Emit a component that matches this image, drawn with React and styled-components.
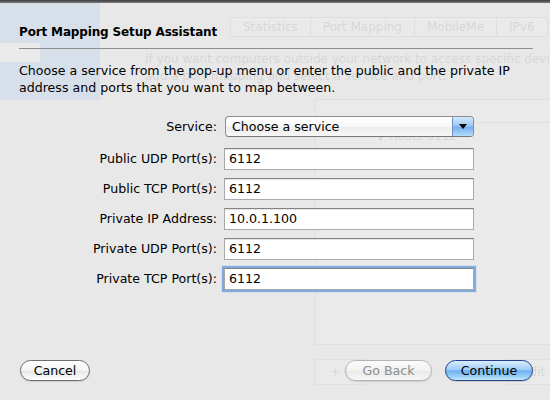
import styled, { createGlobalStyle } from "styled-components";

const GlobalStyle = createGlobalStyle`
  html, body {
    margin: 0;
    padding: 0;
  }
  body {
    width: 550px;
    height: 400px;
    overflow: hidden;
    background: #e8e8e8;
    font-family: "DejaVu Sans", "Liberation Sans", sans-serif;
  }
`;

const Stage = styled.div`
  position: relative;
  width: 550px;
  height: 400px;
  overflow: hidden;
`;

/* window behind the sheet */
const Window = styled.div`
  display: flex;
  width: 550px;
  height: 400px;
  background: #e8e8e8;
`;

const Sidebar = styled.div`
  width: 100px;
  flex-shrink: 0;
`;

const SourceList = styled.div`
  height: 97px;
  margin-top: 3px;
  padding-top: 40px;
  box-sizing: border-box;
  background: #3c98fc;
`;

const SourceItem = styled.div`
  width: 40px;
  height: 19px;
  background: #ffffff;
`;

const Main = styled.div`
  flex: 1;
  display: flex;
  flex-direction: column;
  overflow: hidden;
  padding-top: 17px;
`;

const Tabs = styled.div`
  display: flex;
  margin-left: 130px;
  height: 18px;
  border: 1px solid #8a8a8a;
  border-radius: 3px;
  background: #ffffff;
  width: max-content;
`;

const Tab = styled.div`
  padding: 0 12px;
  font-size: 12px;
  line-height: 18px;
  color: #333;
  border-left: ${(p) => (p.$first ? "none" : "1px solid #8a8a8a")};
`;

const GhostText = styled.p`
  margin: 14px 0 0 45px;
  font-size: 12px;
  line-height: 17px;
  color: #333;
  white-space: nowrap;
`;

const GhostTable = styled.div`
  margin: 14px -20px 0 215px;
  height: 222px;
  border: 1px solid #8a8a8a;
  background: #ffffff;
  padding-top: 22px;
  font-size: 12px;
  color: #333;
`;

const GhostRow = styled.div`
  border-top: 1px solid #8a8a8a;
  padding: 6px 0 0 60px;
`;

const GhostBar = styled.div`
  display: flex;
  justify-content: space-between;
  margin: 14px -10px 0 215px;
`;

const GhostButton = styled.div`
  height: 24px;
  padding: 0 14px;
  border: 1px solid #8a8a8a;
  background: #ffffff;
  font-size: 12px;
  line-height: 24px;
  color: #333;
`;

/* sheet */
const Sheet = styled.div`
  position: absolute;
  inset: 0;
  display: flex;
  flex-direction: column;
  background: rgba(232, 232, 232, 0.9);
  color: #000;
`;

const TopEdge = styled.div`
  height: 3px;
  background: linear-gradient(#3c3c3c, #7d7d7d);
`;

const Title = styled.h1`
  margin: 21px 17px 0 19px;
  padding-bottom: 8px;
  border-bottom: 1px solid #8e8e8e;
  font-size: 12px;
  line-height: 16px;
  font-weight: bold;
  letter-spacing: -0.15px;
`;

const Intro = styled.p`
  margin: 13px 17px 0 19px;
  font-size: 12.6px;
  line-height: 17px;
`;

const Form = styled.div`
  display: grid;
  grid-template-columns: 198px 250px;
  column-gap: 7px;
  row-gap: 8px;
  align-items: center;
  margin: 20px 0 0 19px;
`;

const Label = styled.label`
  text-align: right;
  font-size: 12.6px;
  line-height: 16px;
  margin-bottom: ${(p) => (p.$gap ? "3px" : "0")};
`;

const Popup = styled.div`
  display: flex;
  height: 21px;
  box-sizing: border-box;
  margin-left: 1px;
  margin-bottom: 3px;
  border: 1px solid #8d8d8d;
  border-bottom-color: #777;
  border-radius: 4px;
  overflow: hidden;
  background: linear-gradient(#ffffff 0%, #f7f7f7 50%, #ececec 52%, #f7f7f7 100%);
`;

const PopupText = styled.span`
  flex: 1;
  padding-left: 6px;
  font-size: 12.6px;
  line-height: 19px;
`;

const PopupArrow = styled.span`
  width: 20px;
  display: flex;
  align-items: center;
  justify-content: center;
  border-left: 1px solid #6d93c6;
  background: linear-gradient(#d2e7fc 0%, #9cc6f3 48%, #74adec 52%, #b2dcfc 100%);
`;

const Field = styled.div`
  height: 22px;
  box-sizing: border-box;
  padding-left: 4px;
  border: 1px solid #a9a9a9;
  border-top-color: #848484;
  background: #ffffff;
  box-shadow: ${(p) =>
    p.$focused
      ? "0 0 0 1px #7fa8dc, 0 0 1px 2px rgba(98, 150, 222, 0.75)"
      : "inset 0 1px 0 #e4e4e4"};
  font-size: 12.6px;
  line-height: 20px;
`;

const Footer = styled.div`
  display: flex;
  align-items: center;
  margin-top: auto;
  padding: 0 17px 19px 20px;
`;

const Spacer = styled.div`
  flex: 1;
`;

const Button = styled.button`
  height: 21px;
  min-width: ${(p) => p.$width};
  margin-left: ${(p) => (p.$gap ? "13px" : "0")};
  padding: 0 12px;
  border-radius: 11px;
  font-family: inherit;
  font-size: 12.6px;
  line-height: 19px;
  color: ${(p) => (p.$kind === "disabled" ? "#8d8d8d" : "#000")};
  border: 1px solid
    ${(p) =>
      p.$kind === "primary" ? "#233f8f" : p.$kind === "disabled" ? "#b4b4b4" : "#6e6e6e"};
  background: ${(p) =>
    p.$kind === "primary"
      ? "linear-gradient(#d9eefe 0%, #9fcdf7 45%, #6fb0ef 52%, #9fd3fb 85%, #c9ecfe 100%)"
      : p.$kind === "disabled"
      ? "linear-gradient(#fbfbfb 0%, #f2f2f2 50%, #e9e9e9 52%, #f7f7f7 100%)"
      : "linear-gradient(#ffffff 0%, #f4f4f4 50%, #e6e6e6 52%, #ffffff 100%)"};
  box-shadow: 0 1px 1px rgba(0, 0, 0, 0.12);
`;

const rows = [
  { label: "Public UDP Port(s):", value: "6112" },
  { label: "Public TCP Port(s):", value: "6112" },
  { label: "Private IP Address:", value: "10.0.1.100" },
  { label: "Private UDP Port(s):", value: "6112" },
  { label: "Private TCP Port(s):", value: "6112", focused: true },
];

const App = () => {
  return (
    <Stage>
      <GlobalStyle />
      <Window>
        <Sidebar>
          <SourceList>
            <SourceItem />
          </SourceList>
        </Sidebar>
        <Main>
          <Tabs>
            <Tab $first>Statistics</Tab>
            <Tab>Port Mapping</Tab>
            <Tab>MobileMe</Tab>
            <Tab>IPv6</Tab>
          </Tabs>
          <GhostText>
            If you want computers outside your network to access specific devices,
            <br />
            add a port mapping and select a service and port.
          </GhostText>
          <GhostTable>
            <GhostRow>▼ Hosts 6112</GhostRow>
          </GhostTable>
          <GhostBar>
            <GhostButton>+ –</GhostButton>
            <GhostButton>Edit</GhostButton>
          </GhostBar>
        </Main>
      </Window>

      <Sheet>
        <TopEdge />
        <Title>Port Mapping Setup Assistant</Title>
        <Intro>
          Choose a service from the pop-up menu or enter the public and the private IP
          address and ports that you want to map between.
        </Intro>
        <Form>
          <Label $gap>Service:</Label>
          <Popup>
            <PopupText>Choose a service</PopupText>
            <PopupArrow>
              <svg width="8" height="5" viewBox="0 0 8 5">
                <path d="M0 0 H8 L4 5 Z" fill="#000" />
              </svg>
            </PopupArrow>
          </Popup>
          {rows.map((r) => (
            <>
              <Label key={r.label + "l"}>{r.label}</Label>
              <Field key={r.label + "f"} $focused={r.focused}>
                {r.value}
              </Field>
            </>
          ))}
        </Form>
        <Footer>
          <Button $width="70px">Cancel</Button>
          <Spacer />
          <Button $kind="disabled" $width="87px">
            Go Back
          </Button>
          <Button $kind="primary" $width="88px" $gap>
            Continue
          </Button>
        </Footer>
      </Sheet>
    </Stage>
  );
};

export default App;
